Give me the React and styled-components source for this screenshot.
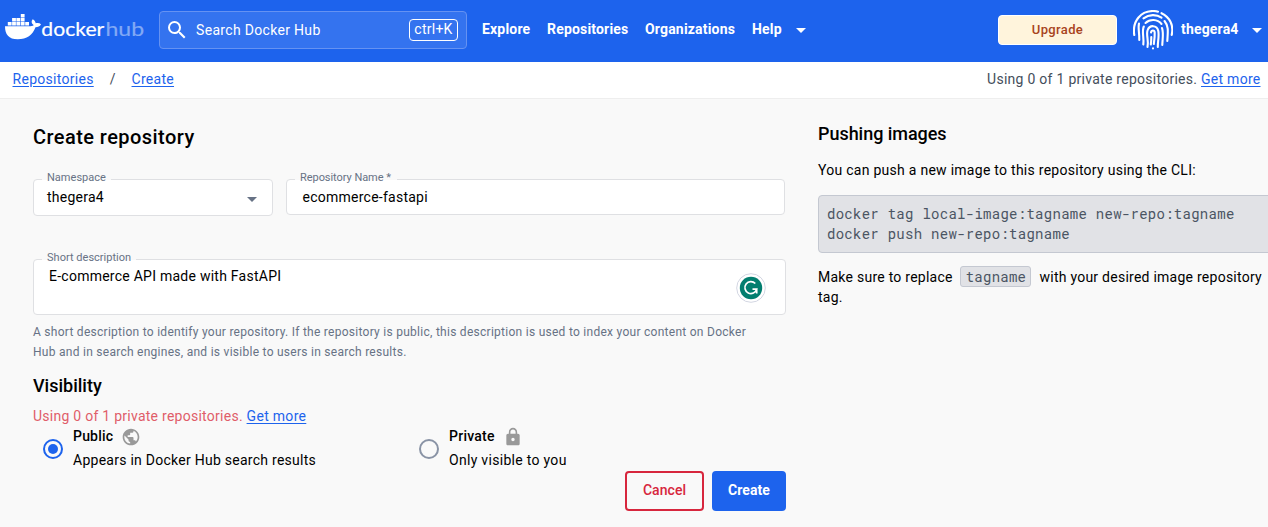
import React from "react";
import styled, { createGlobalStyle } from "styled-components";
import { MdSearch, MdPublic, MdLock, MdArrowDropDown } from "react-icons/md";

const GlobalStyle = createGlobalStyle`
  * { box-sizing: border-box; }
  body {
    margin: 0;
    background: #f9f9f9;
    color: #000;
    font-family: Roboto, "Liberation Sans", sans-serif;
    font-size: 14px;
    line-height: 20px;
    overflow: hidden;
  }
`;

const Page = styled.div`
  width: 1268px;
  height: 527px;
  overflow: hidden;
`;

const Header = styled.header`
  display: flex;
  height: 62px;
  padding: 0 0 2px 5px;
  background: #1d63ed;
  color: #fff;
  align-items: center;
`;

const Logo = styled.svg`
  display: block;
  width: 142px;
  height: 32px;
  margin-bottom: 8px;
`;

const SearchBox = styled.div`
  display: flex;
  align-items: center;
  width: 308px;
  height: 38px;
  margin-left: 12px;
  padding: 0 8px 0 5px;
  border: 1px solid #6592f2;
  border-radius: 4px;
  background: #3473ef;
`;

const SearchText = styled.span`
  flex: 1;
  margin-left: 7px;
  letter-spacing: 0.32px;
`;

const Shortcut = styled.kbd`
  width: 49px;
  height: 22px;
  border: 1px solid #fff;
  border-radius: 4px;
  font: 14px/19px Roboto, sans-serif;
  letter-spacing: 0.25px;
  text-align: center;
`;

const Nav = styled.nav`
  display: flex;
  align-items: center;
  margin-left: 15px;
  gap: 16px;
`;

const NavLink = styled.span`
  font-weight: 700;
  width: ${(p) => p.$w}px;
  padding-bottom: 2px;
  letter-spacing: 0.18px;
  white-space: nowrap;
  line-height: 18px;
`;

const Caret = styled(MdArrowDropDown)`
  display: block;
  width: 24px;
  height: 24px;
  flex: none;
  color: ${(p) => p.color || "#fff"};
`;

const Account = styled.div`
  display: flex;
  align-items: center;
  margin-left: auto;
  margin-right: -1px;
`;

const UpgradeButton = styled.button`
  width: 119px;
  height: 30px;
  padding: 0;
  border: 1px solid #fff;
  border-radius: 4px;
  background: #fff4dc;
  color: #a8431d;
  font: 500 13px/28px Roboto, sans-serif;
  letter-spacing: 0.35px;
`;

const Avatar = styled.svg`
  width: 40px;
  height: 40px;
  margin: 0 8px 0 16px;
`;

const Crumbs = styled.div`
  display: flex;
  justify-content: space-between;
  height: 37px;
  padding: 7px 7.5px 0 12.5px;
  background: #fff;
  border-bottom: 1px solid #eee;
  color: #444e5c;
`;

const Trail = styled.div`
  display: flex;
  gap: 16px;
`;

const Spaced = styled.span`
  letter-spacing: ${(p) => p.$ls}px;
  white-space: nowrap;
`;

const Link = styled.a`
  color: #1d63ed;
  text-decoration: underline;
  text-underline-offset: 2px;
  letter-spacing: ${(p) => p.$ls || 0.3}px;
`;

const Content = styled.main`
  display: flex;
  gap: 32px;
  padding-left: 33px;
`;

const Form = styled.section`
  width: 753px;
  flex: none;
  padding-top: 23px;
`;

const Title = styled.h1`
  margin: 0;
  height: 57px;
  font-size: 20px;
  font-weight: 500;
  line-height: 30px;
  letter-spacing: 0.44px;
`;

const FieldRow = styled.div`
  display: flex;
  gap: 13px;
  height: 80px;
`;

const Field = styled.div`
  position: relative;
  display: flex;
  justify-content: space-between;
  width: ${(p) => p.$w}px;
  height: ${(p) => p.$h}px;
  padding: ${(p) => p.$pad};
  border: 1px solid #dfe0e3;
  border-radius: 4px;
  background: #fff;
  letter-spacing: 0.25px;
`;

const FieldLabel = styled.label`
  position: absolute;
  top: -9px;
  left: 8px;
  width: ${(p) => p.$w}px;
  padding-left: 5px;
  background: linear-gradient(#f9f9f9 9px, #fff 9px);
  color: #677285;
  font-size: 11px;
  line-height: 14px;
  letter-spacing: ${(p) => p.$ls}px;
  white-space: nowrap;
`;

const Assistant = styled.svg`
  width: 30px;
  height: 30px;
  margin-top: 7px;
`;

const Helper = styled.p`
  margin: 7px 0 0;
  color: #677285;
  font-size: 12px;
  letter-spacing: 0.27px;
  white-space: nowrap;
`;

const SectionTitle = styled.h2`
  margin: ${(p) => p.$m};
  font-size: 18px;
  font-weight: 500;
  line-height: 24px;
  letter-spacing: ${(p) => p.$ls}px;
`;

const Quota = styled.div`
  margin-top: 8px;
  color: #e05d69;
  white-space: nowrap;
`;

const Options = styled.div`
  display: flex;
  padding-left: 10px;
`;

const Option = styled.div`
  display: flex;
  flex: none;
  align-items: center;
  gap: 10px;
  width: 376px;
  height: 46px;
`;

const Radio = styled.span`
  display: grid;
  place-items: center;
  width: 20px;
  height: 20px;
  border: 2px solid ${(p) => (p.$on ? "#1d63ed" : "#8993a5")};
  border-radius: 50%;

  &::after {
    content: "";
    width: 10px;
    height: 10px;
    border-radius: 50%;
    background: ${(p) => (p.$on ? "#1d63ed" : "transparent")};
  }
`;

const OptionText = styled.div`
  padding-bottom: 2px;
`;

const OptionName = styled.div`
  display: flex;
  gap: 8px;
  height: 24px;
  font-weight: 500;
  letter-spacing: ${(p) => p.$ls}px;

  svg {
    width: 20px;
    height: 20px;
    margin-top: 1px;
    color: #999;
  }
`;

const Actions = styled.div`
  display: flex;
  justify-content: flex-end;
  gap: 8px;
  margin-top: -1px;
`;

const Button = styled.button`
  width: ${(p) => p.$w}px;
  height: 40px;
  padding: 0 0 2px;
  border: 2px solid ${(p) => (p.$primary ? "#1d63ed" : "#d7263d")};
  border-radius: 4px;
  background: ${(p) => (p.$primary ? "#1d63ed" : "transparent")};
  color: ${(p) => (p.$primary ? "#fff" : "#d7263d")};
  font: ${(p) => (p.$primary ? 700 : 500)} 14px/20px Roboto, sans-serif;
  letter-spacing: 0.05px;
`;

const Aside = styled.aside`
  width: 470px;
  flex: none;
  padding-top: 23px;
`;

const Paragraph = styled.p`
  margin: ${(p) => p.$m};
  white-space: nowrap;
  letter-spacing: ${(p) => p.$ls}px;
`;

const Code = styled.pre`
  height: 58px;
  margin: 15px 0 14px;
  padding: 8px;
  border: 1px solid #c4c8d1;
  border-radius: 4px;
  background: #e1e2e6;
  color: #4b5563;
  font: 14px/20px "Roboto Mono", "DejaVu Sans Mono", monospace;
  letter-spacing: 0.27px;
`;

const Chip = styled.code`
  display: inline-block;
  width: 71px;
  height: 21px;
  margin: -1px 8px 0 4px;
  border: 1px solid #c4c8d1;
  border-radius: 3px;
  background: #e1e2e6;
  color: #4b5563;
  font: 14px/20px "Roboto Mono", "DejaVu Sans Mono", monospace;
  letter-spacing: 0.25px;
  text-align: center;
  vertical-align: top;
`;

function DockerLogo() {
  return (
    <Logo viewBox="0 0 142 32">
      <g fill="#fff">
        <path d="M0 16.2H25.500C27.500 16.200 28.500 15.700 28.600 15C26.300 13.500 26 11 27.700 9.200C29.500 10.200 30.500 11.700 30.700 13.300C32.700 12.700 34.600 13 36 14.200C34.900 16.400 32.900 17.200 30.500 17.200C27.500 25 22 29.200 12.700 29.200C3.700 29.200 0 24.500 0 16.200Z" />
        <path d="M2.800 12h3.800v3.600H2.800zM7.100 12h3.800v3.600H7.100zM11.400 12h3.800v3.600h-3.800zM15.800 12h3.800v3.600h-3.800zM20.200 12h3.800v3.600h-3.800zM7.100 8h3.800v3.500H7.100zM11.400 8h3.800v3.500h-3.800zM15.800 8h3.800v3.500h-3.800zM15.800 4h3.800v3.500h-3.800z" />
      </g>
      <g fontFamily="Lato, sans-serif" fontSize="19.5" strokeWidth="0.2" strokeLinejoin="round">
        <text x="36.300" y="26" fill="#fff" stroke="#fff" textLength="63" lengthAdjust="spacingAndGlyphs">docker</text>
        <text x="100.500" y="26" fill="#82a9f5" stroke="#82a9f5" textLength="38.500" lengthAdjust="spacingAndGlyphs">hub</text>
      </g>
    </Logo>
  );
}

function Fingerprint() {
  return (
    <Avatar viewBox="0 0 40 40" fill="none" stroke="#fff" strokeWidth="2.1" strokeLinecap="round">
      <path d="M1.300 25C-1 11 8 1 20 1c2 0 3.600 .2 5 .7M28.500 3.200C36.500 7 41 15 38.700 25" />
      <path d="M10.500 8.300C16 4.200 23.500 4.200 28.500 7.600M6 13.500C4.800 18 6.500 22.500 6.300 30M12.500 13C17 8.700 24.500 8.900 28.500 14M31.500 11C36 16.500 34.800 22 34.300 31" />
      <path d="M10.300 34.500C11.300 28 8.500 21.500 10.800 16.500M29 18C30.800 23 29.500 29 29.300 35" />
      <path d="M14.500 37C16 31 13 25 14.500 20.500C16.500 14.500 24 14.800 25.300 21C26.300 26.500 24.600 32 24.800 37" />
      <path d="M18 22.500C18.500 19.800 21.500 20 21.700 22.500C21.900 27 21.300 30.500 20.800 34M18.300 27C18.300 30 18.200 32 17.800 34.500M20 38.300v.2" />
    </Avatar>
  );
}

export default function App() {
  return (
    <Page>
      <GlobalStyle />
      <Header>
        <DockerLogo />
        <SearchBox>
          <MdSearch size={24} />
          <SearchText>Search Docker Hub</SearchText>
          <Shortcut>ctrl+K</Shortcut>
        </SearchBox>
        <Nav>
          <NavLink $w={49}>Explore</NavLink>
          <NavLink $w={82}>Repositories</NavLink>
          <NavLink $w={91}>Organizations</NavLink>
          <NavLink $w={21}>Help</NavLink>
          <Caret />
        </Nav>
        <Account>
          <UpgradeButton>Upgrade</UpgradeButton>
          <Fingerprint />
          <NavLink $w={64}>thegera4</NavLink>
          <Caret />
        </Account>
      </Header>
      <Crumbs>
        <Trail>
          <Link $ls={0.29}>Repositories</Link>
          <span>/</span>
          <Link $ls={0.29}>Create</Link>
        </Trail>
        <div>
          <Spaced $ls={0.27}>Using 0 of 1 private repositories. </Spaced>
          <Link $ls={0.27}>Get more</Link>
        </div>
      </Crumbs>
      <Content>
        <Form>
          <Title>Create repository</Title>
          <FieldRow>
            <Field $w={240} $h={37} $pad="7px 8px 0 13px">
              <FieldLabel $w={69} $ls={0.02}>Namespace</FieldLabel>
              thegera4
              <Caret color="#677285" />
            </Field>
            <Field $w={499} $h={36} $pad="7px 15px 7px 15.5px">
              <FieldLabel $w={102} $ls={-0.05}>Repository Name *</FieldLabel>
              ecommerce-fastapi
            </Field>
          </FieldRow>
          <Field $w={753} $h={56} $pad="6px 19px 0 15px">
            <FieldLabel $w={94} $ls={0.02}>Short description</FieldLabel>
            E-commerce API made with FastAPI
            <Assistant viewBox="0 0 30 30">
              <circle cx="15" cy="15" r="14.300" fill="#fff" stroke="#d3d6e2" />
              <circle cx="15" cy="15" r="11.200" fill="#027e6f" />
              <path d="M19.300 10.500A6 6 0 1 0 20.700 16.200H16.500M20.700 16.200V20.500" fill="none" stroke="#fff" strokeWidth="1.700" />
            </Assistant>
          </Field>
          <Helper>
            A short description to identify your repository. If the repository is public, this description is used to index your content on Docker
            <br />
            Hub and in search engines, and is visible to users in search results.
          </Helper>
          <SectionTitle $m="12px 0 0" $ls={0}>Visibility</SectionTitle>
          <Quota>
            <Spaced $ls={0.26}>Using 0 of 1 private repositories. </Spaced>
            <Link>Get more</Link>
          </Quota>
          <Options>
            <Option>
              <Radio $on />
              <OptionText>
                <OptionName $ls={0.2}>Public <MdPublic /></OptionName>
                <Spaced $ls={0.26}>Appears in Docker Hub search results</Spaced>
              </OptionText>
            </Option>
            <Option>
              <Radio />
              <OptionText>
                <OptionName $ls={0.25}>Private <MdLock /></OptionName>
                <Spaced $ls={0.3}>Only visible to you</Spaced>
              </OptionText>
            </Option>
          </Options>
          <Actions>
            <Button $w={79}>Cancel</Button>
            <Button $w={74} $primary>Create</Button>
          </Actions>
        </Form>
        <Aside>
          <SectionTitle $m="0" $ls={-0.04}>Pushing images</SectionTitle>
          <Paragraph $m="14px 0 0" $ls={0.27}>You can push a new image to this repository using the CLI:</Paragraph>
          <Code>{"docker tag local-image:tagname new-repo:tagname\ndocker push new-repo:tagname"}</Code>
          <Paragraph $m="0" $ls={0.25}>
            Make sure to replace <Chip>tagname</Chip>with your desired image repository
            <br />
            tag.
          </Paragraph>
        </Aside>
      </Content>
    </Page>
  );
}
